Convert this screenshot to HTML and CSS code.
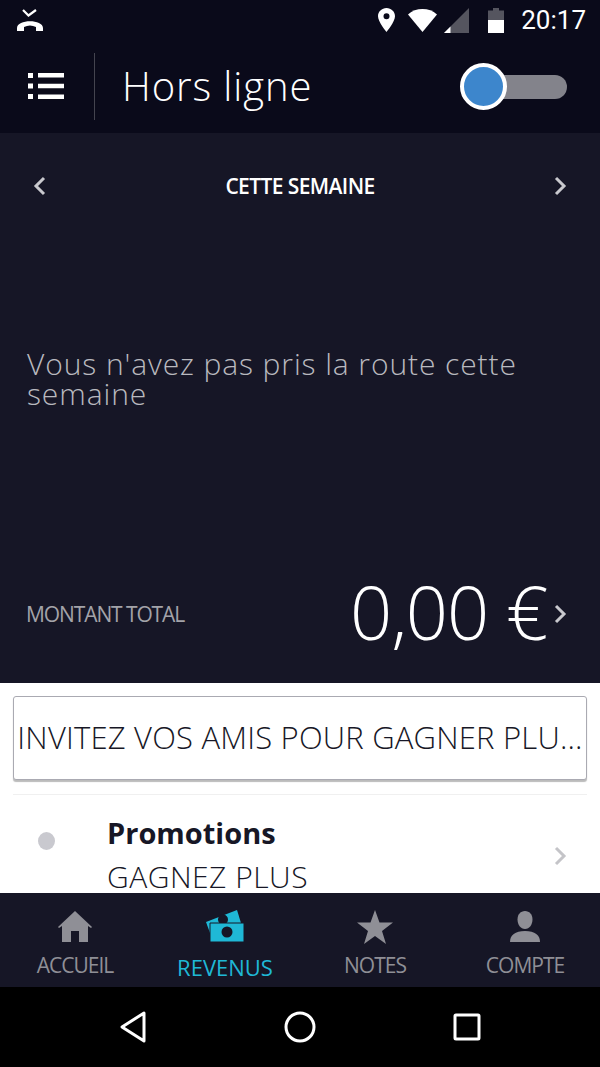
FILE: index.html
```html
<!DOCTYPE html>
<html lang="fr">
    <head>
        <meta charset="UTF-8">
        <title>Hors ligne</title>
        <meta name="viewport" content="width=device-width, initial-scale=1.0">
        <link rel="stylesheet" href="styles.css">
    </head>
    <body>
        <div class="phone">
            <div class="statusBar">
                <svg class="callIcon" width="28" height="24" viewBox="0 0 28 24">
                    <path d="M7 2l5.500 5.500L20 2" fill="none" stroke="#fff" stroke-width="2.200"/>
                    <path d="M1 23v-3C1 11 27 11 27 20v3h-7v-4c-4-2-8-2-12 0v4H1z" fill="#fff"/>
                </svg>
                <div class="statusRight">
                    <svg width="17" height="24" viewBox="0 0 17 24">
                        <path fill-rule="evenodd" d="M8.500 0C3.800 0 0 3.600 0 8.300 0 14 8.500 24 8.500 24S17 14 17 8.300C17 3.600 13.200 0 8.500 0zm0 5.300a3 3 0 1 1 0 6 3 3 0 0 1 0-6z" fill="#fff"/>
                    </svg>
                    <svg class="wifi" width="29" height="24" viewBox="0 0 29 24">
                        <path d="M0 6.500C4 2.800 9 1 14.500 1S25 2.800 29 6.500L14.500 24z" fill="#fff"/>
                    </svg>
                    <svg class="signal" width="25" height="25" viewBox="0 0 25 25">
                        <path d="M25 0v25H0z" fill="#55555f"/>
                        <path d="M6.500 18.500V25H0z" fill="#fff"/>
                    </svg>
                    <svg class="battery" width="16" height="25" viewBox="0 0 16 25">
                        <path d="M5 0h6v2.500h5V13H0V2.500h5z" fill="#55555f"/>
                        <path d="M0 12h16v13H0z" fill="#fff"/>
                    </svg>
                    <span class="clock">20:17</span>
                </div>
            </div>

            <header class="topBar">
                <svg class="menuIcon" width="38" height="28" viewBox="0 0 38 28">
                    <path d="M1 1h5v5H1zM1 11.500h5v5H1zM1 22h5v5H1zM11 1h26v4.500H11zM11 11.750h26v4.500H11zM11 22.500h26V27H11z" fill="#fff"/>
                </svg>
                <div class="divider"></div>
                <h1 class="pageTitle">Hors ligne</h1>
                <div class="toggle">
                    <div class="toggleKnob"></div>
                </div>
            </header>

            <main class="earnings">
                <div class="weekRow">
                    <svg width="14" height="20" viewBox="0 0 14 20"><path d="M11 2L3 10l8 8" fill="none" stroke="#c9c9ce" stroke-width="3"/></svg>
                    <span class="weekLabel">CETTE SEMAINE</span>
                    <svg width="14" height="20" viewBox="0 0 14 20"><path d="M3 2l8 8-8 8" fill="none" stroke="#c9c9ce" stroke-width="3"/></svg>
                </div>
                <p class="emptyText">Vous n'avez pas pris la route cette semaine</p>
                <div class="totalRow">
                    <span class="totalLabel">MONTANT TOTAL</span>
                    <span class="totalAmount">0,00 €</span>
                    <svg class="totalArrow" width="14" height="20" viewBox="0 0 14 20"><path d="M3 2l8 8-8 8" fill="none" stroke="#c9c9ce" stroke-width="3"/></svg>
                </div>
            </main>

            <section class="panel">
                <button class="inviteBtn">INVITEZ VOS AMIS POUR GAGNER PLU...</button>
                <div class="promoRow">
                    <div class="promoDot"></div>
                    <div class="promoText">
                        <div class="promoTitle">Promotions</div>
                        <div class="promoSub">GAGNEZ PLUS</div>
                    </div>
                    <svg class="promoArrow" width="14" height="20" viewBox="0 0 14 20"><path d="M3 2l8 8-8 8" fill="none" stroke="#c4c4c8" stroke-width="3"/></svg>
                </div>
            </section>

            <nav class="tabBar">
                <div class="tab">
                    <svg width="36" height="34" viewBox="0 0 36 34">
                        <path d="M18 1L1 17l1 1 3-2v16h9V21h8v11h9V16l3 2 1-1z" fill="#8f8f96"/>
                    </svg>
                    <span>ACCUEIL</span>
                </div>
                <div class="tab active">
                    <svg width="40" height="34" viewBox="0 0 40 34">
                        <path d="M1 13L32 1l4 13L5 24z" fill="#1fb8d6"/>
                        <circle cx="18" cy="10.500" r="5" fill="#161626"/>
                        <path d="M5 14h34v19H5z" fill="#1fb8d6" stroke="#161626" stroke-width="1"/>
                        <circle cx="22" cy="23" r="5.500" fill="#161626"/>
                    </svg>
                    <span>REVENUS</span>
                </div>
                <div class="tab">
                    <svg width="36" height="34" viewBox="0 0 36 34">
                        <path d="M18 0l4.500 12.500H36l-11 8.500 4 13-11-8-11 8 4-13L0 12.500h13.500z" fill="#8f8f96"/>
                    </svg>
                    <span>NOTES</span>
                </div>
                <div class="tab">
                    <svg width="32" height="34" viewBox="0 0 32 34">
                        <path d="M16 1c4.500 0 7.500 3.500 7.500 8.500S20.500 19 16 19s-7.500-4.500-7.500-9.500S11.500 1 16 1z" fill="#8f8f96"/>
                        <path d="M1 32c0-7 5-11 15-11s15 4 15 11z" fill="#8f8f96"/>
                    </svg>
                    <span>COMPTE</span>
                </div>
            </nav>

            <div class="navBar">
                <svg width="30" height="34" viewBox="0 0 30 34">
                    <path d="M26 3v28L4 17z" fill="none" stroke="#fff" stroke-width="3" stroke-linejoin="round"/>
                </svg>
                <svg width="32" height="34" viewBox="0 0 32 34">
                    <circle cx="16" cy="17" r="14" fill="none" stroke="#fff" stroke-width="3"/>
                </svg>
                <svg width="30" height="30" viewBox="0 0 30 30">
                    <rect x="3" y="3" width="24" height="24" rx="1" fill="none" stroke="#fff" stroke-width="3"/>
                </svg>
            </div>
        </div>
    </body>
</html>
```

FILE: styles.css
```css
body {
    margin: 0;
    padding: 0;
    font-family: "Open Sans", "Noto Sans", sans-serif;
    background-color: #000;
}
.phone {
    width: 600px;
    height: 1067px;
    display: flex;
    flex-direction: column;
    overflow: hidden;
}
.statusBar {
    height: 40px;
    flex: none;
    box-sizing: border-box;
    background-color: #0a0a1a;
    display: flex;
    align-items: center;
    justify-content: space-between;
    padding: 0 14px 0 16px;
}
.statusRight {
    display: flex;
    align-items: center;
}
.wifi {
    margin-left: 13px;
}
.signal {
    margin-left: 7px;
}
.battery {
    margin-left: 19px;
}
.clock {
    font-family: Roboto, sans-serif;
    font-size: 26px;
    color: #fff;
    margin-left: 17px;
}
.topBar {
    height: 93px;
    flex: none;
    background-color: #0a0a1a;
    display: flex;
    align-items: center;
    padding: 0 33px 0 27px;
}
.menuIcon {
    margin-top: -1px;
}
.divider {
    width: 1px;
    height: 67px;
    margin: 0 27px 0 29px;
    background-color: #44444f;
}
.pageTitle {
    flex: 1;
    margin: -3px 0 0 0;
    font-size: 40px;
    font-weight: 300;
    letter-spacing: 0.9px;
    color: #fff;
}
.toggle {
    position: relative;
    width: 97px;
    height: 24px;
    border-radius: 12px;
    background-color: #83838b;
}
.toggleKnob {
    position: absolute;
    left: -10px;
    top: -12px;
    width: 39px;
    height: 39px;
    border: 4px solid #fff;
    border-radius: 50%;
    background-color: #3d86cc;
}
.earnings {
    height: 550px;
    flex: none;
    box-sizing: border-box;
    background-color: #161626;
    display: flex;
    flex-direction: column;
    padding: 0 33px 0 27px;
}
.weekRow {
    display: flex;
    align-items: center;
    justify-content: space-between;
    height: 20px;
    margin: 43px 0 0 6px;
}
.weekLabel {
    font-size: 21px;
    font-weight: 600;
    color: #fff;
    letter-spacing: -0.6px;
}
.emptyText {
    margin: 153px 0 0 0;
    font-size: 30px;
    font-weight: 300;
    line-height: 30px;
    letter-spacing: 0.9px;
    color: #b9b9bf;
    height: 60px;
}
.totalRow {
    display: flex;
    align-items: center;
    margin-top: 160px;
    height: 90px;
}
.totalLabel {
    flex: 1;
    margin-left: -1px;
    font-size: 21px;
    color: #a3a3a9;
    letter-spacing: -1.1px;
}
.totalAmount {
    margin-top: -5px;
    font-size: 74px;
    font-weight: 300;
    color: #fff;
    letter-spacing: -1.2px;
}
.totalArrow {
    margin-left: 6px;
}
.panel {
    height: 210px;
    flex: none;
    box-sizing: border-box;
    background-color: #fff;
    padding: 13px 13px 0 13px;
}
.inviteBtn {
    display: block;
    width: 574px;
    height: 84px;
    padding: 0 0 2px 0;
    font-family: inherit;
    font-size: 31px;
    font-weight: 300;
    letter-spacing: 0.2px;
    color: #171726;
    white-space: nowrap;
    background-color: #fff;
    border: 1px solid #aaaab2;
    border-radius: 3px;
    box-shadow: 0 2px 1px #bbb;
}
.promoRow {
    display: flex;
    align-items: center;
    height: 97px;
    margin-top: 14px;
    padding: 0 20px 0 25px;
    border-top: 1px solid #f0f0f0;
}
.promoDot {
    width: 17px;
    height: 18px;
    margin-top: -5px;
    border-radius: 50%;
    background-color: #c9c9cf;
}
.promoText {
    flex: 1;
    margin: 19px 0 0 52px;
}
.promoTitle {
    font-size: 29px;
    font-weight: 700;
    line-height: 40px;
    margin-bottom: 7px;
    color: #171726;
}
.promoSub {
    font-size: 30px;
    font-weight: 300;
    line-height: 34px;
    letter-spacing: 0.5px;
    color: #171726;
}
.promoArrow {
    margin-top: 25px;
}
.tabBar {
    height: 94px;
    flex: none;
    background-color: #161626;
    display: flex;
}
.tab {
    flex: 1;
    display: flex;
    flex-direction: column;
    align-items: center;
    padding-top: 17px;
    font-size: 21px;
    letter-spacing: -1px;
    color: #8f8f96;
}
.tab span {
    margin-top: 7px;
}
.tab.active {
    padding-top: 16px;
    font-size: 22px;
    letter-spacing: 0;
    color: #1fb8d6;
}
.tab.active span {
    margin-top: 9px;
}
.navBar {
    height: 80px;
    flex: none;
    background-color: #000;
    display: flex;
    align-items: center;
    justify-content: space-between;
    padding: 0 118px 0 118px;
}
```
